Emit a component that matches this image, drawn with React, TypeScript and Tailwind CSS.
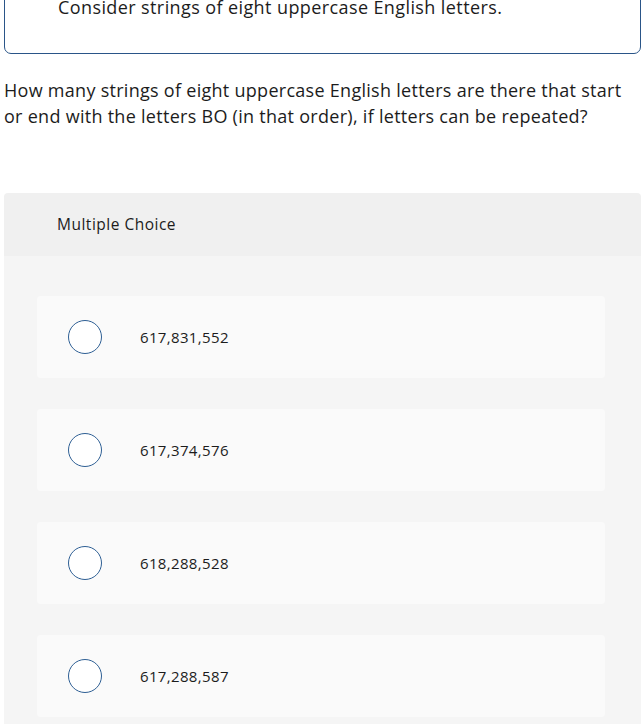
import React from "react";

const options = ["617,831,552", "617,374,576", "618,288,528", "617,288,587"];

export default function App() {
  return (
    <div className="w-[644px] h-[724px] overflow-hidden bg-white text-[#1c1c1c]" style={{ fontFamily: "'Open Sans', sans-serif" }}>
      <div className="-mt-[20px] ml-[4px] mr-[3px] h-[74px] border-[1.5px] border-[#2a5588] rounded-b-[7px] pl-[53px] pt-[14px]">
        <p className="text-[18px] leading-[24px] tracking-[0.4px]">Consider strings of eight uppercase English letters.</p>
      </div>
      <p className="mt-[23px] ml-[4px] mr-[10px] text-[18px] leading-[26px] tracking-[0.28px]">
        How many strings of eight uppercase English letters are there that start or end with the letters BO (in that order), if letters can be repeated?
      </p>
      <div className="mt-[64px] ml-[4px] mr-[3px] rounded-t-[4px] overflow-hidden">
        <div className="h-[63px] bg-[#f0f0f0] flex items-center pl-[53px] text-[15.5px] tracking-[0.5px]">Multiple Choice</div>
        <div className="bg-[#f5f5f5] pl-[33px] pr-[36px] pt-[40px] pb-[40px] flex flex-col gap-[31px]">
          {options.map((o) => (
            <div key={o} className="h-[82px] bg-[#fafafa] rounded-[4px] flex items-center">
              <div className="ml-[31px] w-[34px] h-[34px] rounded-full border-[1.5px] border-[#2e5f94] bg-white" />
              <span className="ml-[38px] text-[15px] tracking-[0.35px]">{o}</span>
            </div>
          ))}
        </div>
      </div>
    </div>
  );
}
